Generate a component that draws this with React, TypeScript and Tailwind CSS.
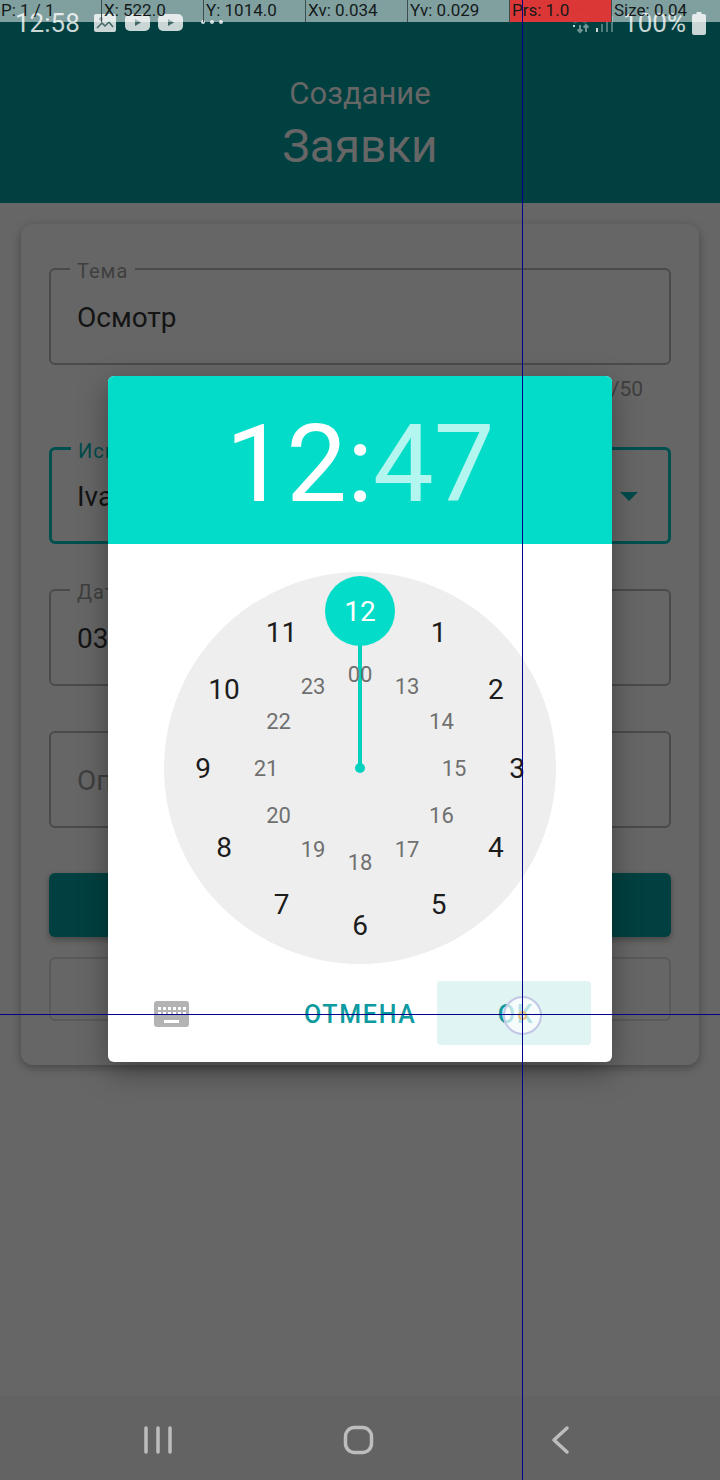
const ROBOTO = { fontFamily: "Roboto, 'Noto Sans', sans-serif" };

const pointerStats = [
  { text: "P: 1 / 1" },
  { text: "X: 522.0" },
  { text: "Y: 1014.0" },
  { text: "Xv: 0.034" },
  { text: "Yv: 0.029" },
  { text: "Prs: 1.0", red: true },
  { text: "Size: 0.04" },
];

const outerHours = [12, 1, 2, 3, 4, 5, 6, 7, 8, 9, 10, 11];
const innerHours = ["00", "13", "14", "15", "16", "17", "18", "19", "20", "21", "22", "23"];

function polar(index: number, radius: number) {
  const angle = (index * Math.PI) / 6;
  const cos = Math.cos(angle);
  return {
    left: 196 + radius * Math.sin(angle),
    // numbers on the lower half sit a touch lower in the picture
    top: 196 - radius * cos + (cos < -0.01 ? 1 : 0.5),
  };
}

function StatusBar() {
  return (
    <div className="absolute left-0 top-0 flex h-[45px] w-full items-center justify-between pl-[15px] pr-[14px] text-[#c9d6d5]">
      <div className="flex items-center">
        <span className="text-[26px] leading-[32px]">12:58</span>
        <svg width="130" height="24" viewBox="0 0 130 24" className="ml-[14px] mt-[1px]" fill="currentColor">
          <rect x="0" y="3" width="22" height="18" rx="2" />
          <circle cx="7" cy="8" r="2" fill="#3f6664" />
          <path d="M3 17l5-5 3 3 4-4 4 5" fill="none" stroke="#3f6664" strokeWidth="1.5" />
          <rect x="31" y="3" width="25" height="17" rx="5" />
          <path d="M41 8l6 3.5-6 3.5z" fill="#3f6664" />
          <rect x="64" y="3" width="25" height="17" rx="5" />
          <path d="M74 8l6 3.5-6 3.5z" fill="#3f6664" />
          <circle cx="109" cy="11" r="2" />
          <circle cx="118" cy="11" r="2" />
          <circle cx="127" cy="11" r="2" />
        </svg>
      </div>
      <div className="flex items-center">
        <svg width="46" height="24" viewBox="0 0 46 24" className="mr-[8px]" fill="none" stroke="currentColor" strokeWidth="2">
          <path d="M1 8c6-6 14-6 20 0M5 12c4-3 8-3 12 0" opacity="0.25" />
          <path d="M4 15h2" />
          <path d="M11 14v7M8.500 18.500l2.500 2.500 2.500-2.500M17 21v-7M14.500 16.500l2.500-2.500 2.500 2.500" opacity="0.55" />
          <path d="M28 21v-4" />
          <path d="M33 21V13M38 21V9M43 21V5" opacity="0.4" />
        </svg>
        <span className="text-[26px] leading-[32px]">100%</span>
        <svg width="14" height="24" viewBox="0 0 14 24" className="ml-[6px]" fill="currentColor">
          <path d="M4.500 1h5v2h2.500a2 2 0 0 1 2 2v17a2 2 0 0 1-2 2H2a2 2 0 0 1-2-2V5a2 2 0 0 1 2-2h2.500z" />
        </svg>
      </div>
    </div>
  );
}

function PointerBar() {
  return (
    <div className="absolute left-[-1px] top-0 flex h-[22px] w-[721px] bg-white/50">
      {pointerStats.map((stat, i) => (
        <div
          key={stat.text}
          className={
            "h-full w-[102px] overflow-hidden whitespace-nowrap pl-[2px] text-[17px] leading-[21px] text-[#141a1a] " +
            (i > 0 ? "border-l border-[#3d4d4c] " : "") +
            (stat.red ? "bg-[#e62b2b]/90 " : "")
          }
        >
          {stat.text}
        </div>
      ))}
    </div>
  );
}

function Field({
  label,
  value,
  active,
  muted,
  arrow,
}: {
  label?: string;
  value: string;
  active?: boolean;
  muted?: boolean;
  arrow?: boolean;
}) {
  return (
    <div
      className={
        "relative flex h-[97px] items-center justify-between rounded-[6px] pr-[30px] pt-[2px] " +
        (active ? "border-[3px] border-[#005050] pl-[25px]" : "border-2 border-[#4a4a4a] pl-[26px]")
      }
    >
      {label && (
        <span
          className={
            "absolute left-[19px] top-[-9px] bg-[#666666] px-[7px] text-[20px] leading-[20px] tracking-[1px] " +
            (active ? "text-[#004b4b]" : "text-[#3f3f3f]")
          }
        >
          {label}
        </span>
      )}
      <span className={"text-[28px] leading-[36px] " + (muted ? "text-[#3f3f3f]" : "text-[#141414]")}>{value}</span>
      {arrow && <div className="h-0 w-0 border-x-[9px] border-t-[9px] border-x-transparent border-t-[#004b4b]" />}
    </div>
  );
}

function Clock() {
  return (
    <div className="relative h-[392px] w-[392px] rounded-full bg-[#eeeeee]">
      <div className="absolute left-[194px] top-[39px] h-[157px] w-[4px] bg-[#03d1bd]" />
      <div className="absolute left-[191px] top-[191px] h-[10px] w-[10px] rounded-full bg-[#03d1bd]" />
      <div className="absolute left-[161px] top-[4px] h-[70px] w-[70px] rounded-full bg-[#03dcc8]" />
      {outerHours.map((hour, i) => (
        <span
          key={hour}
          className={
            "absolute -translate-x-1/2 -translate-y-1/2 text-[28px] leading-none " +
            (hour === 12 ? "text-white" : "text-[#1c1c1c]")
          }
          style={polar(i, 157)}
        >
          {hour}
        </span>
      ))}
      {innerHours.map((hour, i) => (
        <span
          key={hour}
          className="absolute -translate-x-1/2 -translate-y-1/2 text-[22px] leading-none text-[#707070]"
          style={polar(i, 94)}
        >
          {hour}
        </span>
      ))}
    </div>
  );
}

function TimeDialog() {
  return (
    <div className="absolute left-[108px] top-[376px] flex h-[686px] w-[504px] flex-col overflow-hidden rounded-[6px] bg-white shadow-[0_10px_30px_rgba(0,0,0,0.35)]">
      <div className="flex h-[168px] items-center justify-center bg-[#03dcc8] pt-[8px] text-[108px] font-normal leading-none text-white">
        <span>12:</span>
        <span className="text-white/70">47</span>
      </div>
      <div className="flex justify-center pt-[28px]">
        <Clock />
      </div>
      <div className="flex items-center pl-[46px] pr-[21px] pt-[17px]">
        <svg width="35" height="26" viewBox="0 0 35 26" className="mt-[1px]">
          <rect width="35" height="26" rx="3" fill="#b3b3b3" />
          <g fill="#ffffff">
            <rect x="4" y="6" width="3" height="3" />
            <rect x="9" y="6" width="3" height="3" />
            <rect x="14" y="6" width="3" height="3" />
            <rect x="19" y="6" width="3" height="3" />
            <rect x="24" y="6" width="3" height="3" />
            <rect x="29" y="6" width="3" height="3" />
            <rect x="4" y="11" width="3" height="3" />
            <rect x="9" y="11" width="3" height="3" />
            <rect x="14" y="11" width="3" height="3" />
            <rect x="19" y="11" width="3" height="3" />
            <rect x="24" y="11" width="3" height="3" />
            <rect x="29" y="11" width="3" height="3" />
            <rect x="10" y="19" width="15" height="3" />
          </g>
        </svg>
        <span className="ml-[115px] mt-[4px] text-[25px] font-medium tracking-[1.7px] text-[#0d9aa0]">ОТМЕНА</span>
        <div className="ml-auto flex h-[64px] w-[154px] items-center justify-center rounded-[4px] bg-[#e0f4f3] pl-[4px] pt-[4px] text-[25px] font-medium tracking-[1.7px] text-[#0d9aa0]">
          OK
        </div>
      </div>
    </div>
  );
}

export default function App() {
  return (
    <div className="relative flex h-[1480px] w-[720px] flex-col overflow-hidden bg-[#666666]" style={ROBOTO}>
      <header className="flex h-[203px] flex-col items-center bg-[#004040] pt-[73px] text-[#666666]">
        <div className="text-[31px] leading-[42px]">Создание</div>
        <div className="mt-[3px] text-[46px] leading-[56px]">Заявки</div>
      </header>

      <main className="mx-[21px] mt-[21px] flex h-[841px] flex-col rounded-[12px] bg-[#666666] px-[28px] pt-[44px] shadow-[0_3px_10px_rgba(0,0,0,0.3)]">
        <Field label="Тема" value="Осмотр" />
        <div className="mb-[44px] mt-[10px] h-[28px] pr-[28px] text-right text-[21px] leading-[28px] text-[#3f3f3f]">6/50</div>
        <Field label="Исп" value="Iva" active arrow />
        <div className="mt-[45px]">
          <Field label="Дат" value="03" />
        </div>
        <div className="mt-[45px]">
          <Field value="Оп" muted />
        </div>
        <div className="mt-[45px] h-[64px] rounded-[6px] bg-[#004040] shadow-[0_3px_6px_rgba(0,0,0,0.3)]" />
        <div className="mt-[20px] h-[64px] rounded-[6px] border-2 border-[#5a5a5a]" />
      </main>

      <nav className="mt-auto flex h-[84px] items-center bg-[#636363] text-[#bdbdbd]">
        <svg width="720" height="84" viewBox="0 0 720 84" fill="none" stroke="currentColor" strokeWidth="3.500" strokeLinecap="round" strokeLinejoin="round">
          <path d="M146 32v24M158 32v24M170 32v24" />
          <rect x="345.500" y="31.500" width="26" height="25" rx="9" />
          <path d="M567 32l-13 12 13 12" />
        </svg>
      </nav>

      <TimeDialog />
      <StatusBar />
      <PointerBar />

      <div className="absolute left-[503px] top-[996px] flex h-[39px] w-[39px] items-center justify-center rounded-full border-2 border-[#c3c7e6] bg-white/70">
        <div className="h-[9px] w-[9px] rounded-full border-2 border-[#e8c27a]" />
      </div>
      <div className="absolute left-[522px] top-0 h-full w-px bg-[#00008b]" />
      <div className="absolute left-0 top-[1014px] h-px w-full bg-[#00008b]" />
    </div>
  );
}
